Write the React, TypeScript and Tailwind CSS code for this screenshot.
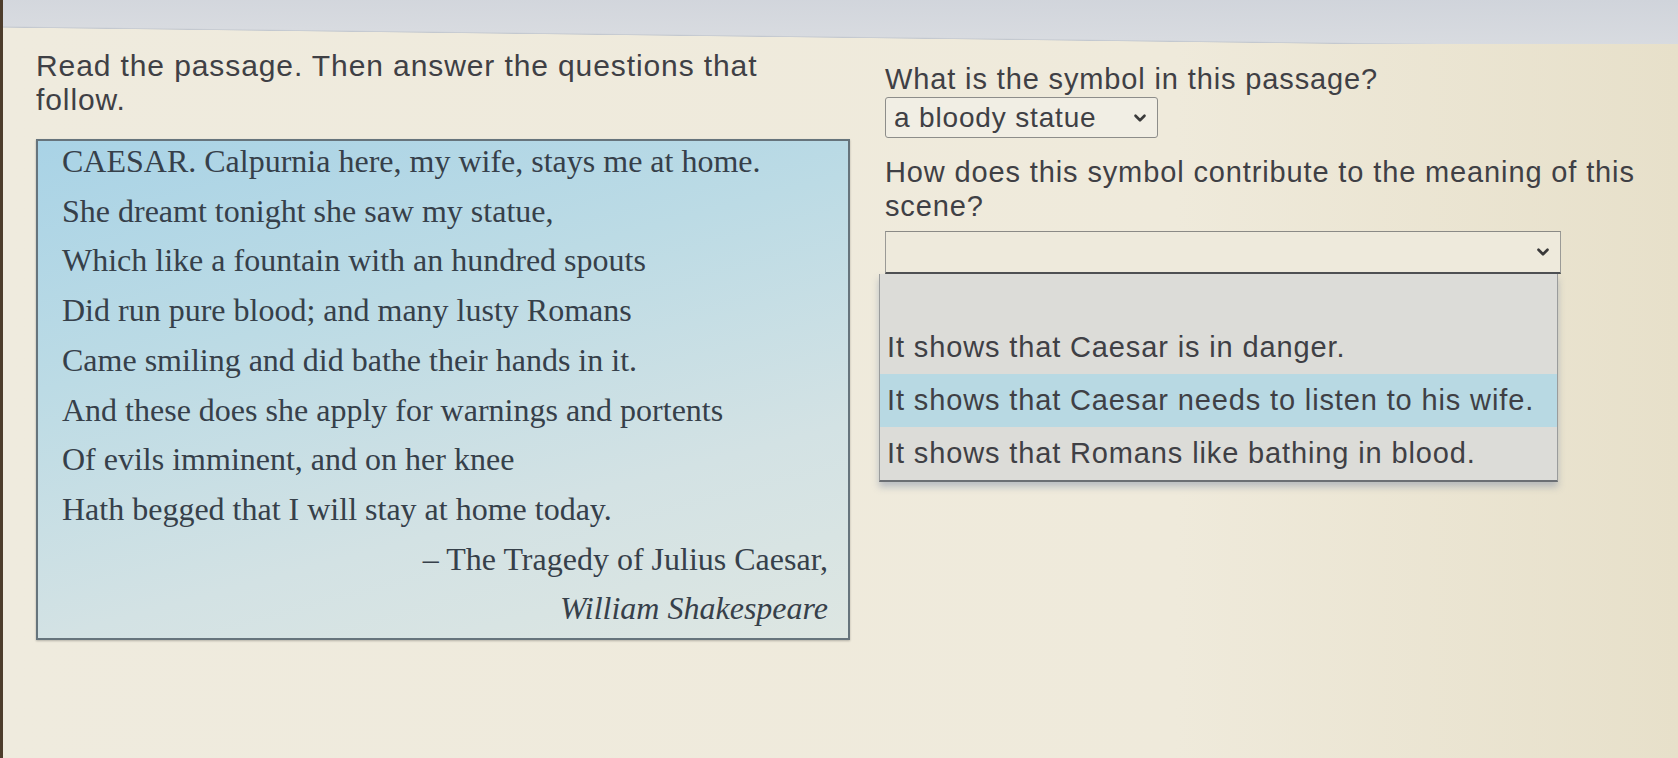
import { ChevronDown } from "lucide-react";

const PASSAGE = [
  "CAESAR. Calpurnia here, my wife, stays me at home.",
  "She dreamt tonight she saw my statue,",
  "Which like a fountain with an hundred spouts",
  "Did run pure blood; and many lusty Romans",
  "Came smiling and did bathe their hands in it.",
  "And these does she apply for warnings and portents",
  "Of evils imminent, and on her knee",
  "Hath begged that I will stay at home today.",
];

const OPTIONS = [
  "It shows that Caesar is in danger.",
  "It shows that Caesar needs to listen to his wife.",
  "It shows that Romans like bathing in blood.",
];

const SANS = "font-['Liberation_Sans',Arial,sans-serif] tracking-[0.03em] text-[#3f4045]";

export default function App() {
  return (
    <div className="h-[758px] w-full overflow-hidden border-l-[3px] border-[#4d3d2c] bg-[linear-gradient(90deg,#efebde_0%,#efeadb_70%,#e7e0ca_100%)]">
      {/* browser edge at the top */}
      <div className="h-[44px] w-full bg-[linear-gradient(180.7deg,#d0d4db_0%,#d8dbe0_72%,#c3c8cf_74%,transparent_75%)]" />

      <div className="flex gap-[35px] pl-[33px] pt-[5px]">
        {/* passage column */}
        <div className="w-[814px] shrink-0">
          <p className={`${SANS} text-[30px] leading-[34px]`}>
            Read the passage. Then answer the questions that follow.
          </p>

          <div className="mt-[22px] h-[501px] border-2 border-[#66747c] bg-[linear-gradient(165deg,#a9d3e6_0%,#bcdbe5_35%,#d3e2e4_70%,#dde6e2_100%)] pl-[24px] pr-[20px] shadow-[0_1px_2px_rgba(0,0,0,0.25)]">
            <div className="-mt-[4px] font-['Liberation_Serif','Times_New_Roman',serif] text-[32px] leading-[49.7px] text-[#36404a]">
              {PASSAGE.map((line) => (
                <div key={line} className="whitespace-nowrap">{line}</div>
              ))}
              <div className="text-right">– The Tragedy of Julius Caesar,</div>
              <div className="text-right italic">William Shakespeare</div>
            </div>
          </div>
        </div>

        {/* questions column */}
        <div className="w-[780px] shrink-0 pt-[13px]">
          <p className={`${SANS} text-[29px] leading-[34px]`}>What is the symbol in this passage?</p>

          <div className="mt-px flex h-[41px] w-[273px] items-center justify-between rounded-[3px] border-[1.5px] border-[#8d8d8a] bg-[#f1eee4] pl-[8px] pr-[8px]">
            <span className={`${SANS} text-[28px]`}>a bloody statue</span>
            <ChevronDown className="h-[18px] w-[18px] text-[#3a3a3a]" strokeWidth={3.5} />
          </div>

          <p className={`${SANS} mt-[17px] text-[29px] leading-[34px]`}>
            How does this symbol contribute to the meaning of this scene?
          </p>

          <div className="w-[676px]">
            <div className="mt-[8px] flex h-[43px] items-center justify-end border-t-[1.5px] border-r-[1.5px] border-b-[2.5px] border-l-[1.5px] border-t-[#8a8a86] border-r-[#9a9a96] border-b-[#4e5052] border-l-[#9a9a96] bg-[#eeeadc] pr-[8px]">
              <ChevronDown className="h-[18px] w-[18px] text-[#3a3a3a]" strokeWidth={3.5} />
            </div>

            {/* open option list */}
            <div className="-ml-[6px] mr-[3px] border-x-[1.5px] border-b-2 border-x-[#9a9c9c] border-b-[#6b6f74] bg-[#dcdcd8] shadow-[0_5px_7px_rgba(90,110,150,0.35)]">
              <div className="h-[47px]" />
              {OPTIONS.map((opt, i) => (
                <div
                  key={opt}
                  className={`flex h-[53px] items-center pl-[7px] ${SANS} text-[29px] ${
                    i === 1 ? "bg-[#b8d9e3]" : ""
                  }`}
                >
                  {opt}
                </div>
              ))}
            </div>
          </div>
        </div>
      </div>
    </div>
  );
}
